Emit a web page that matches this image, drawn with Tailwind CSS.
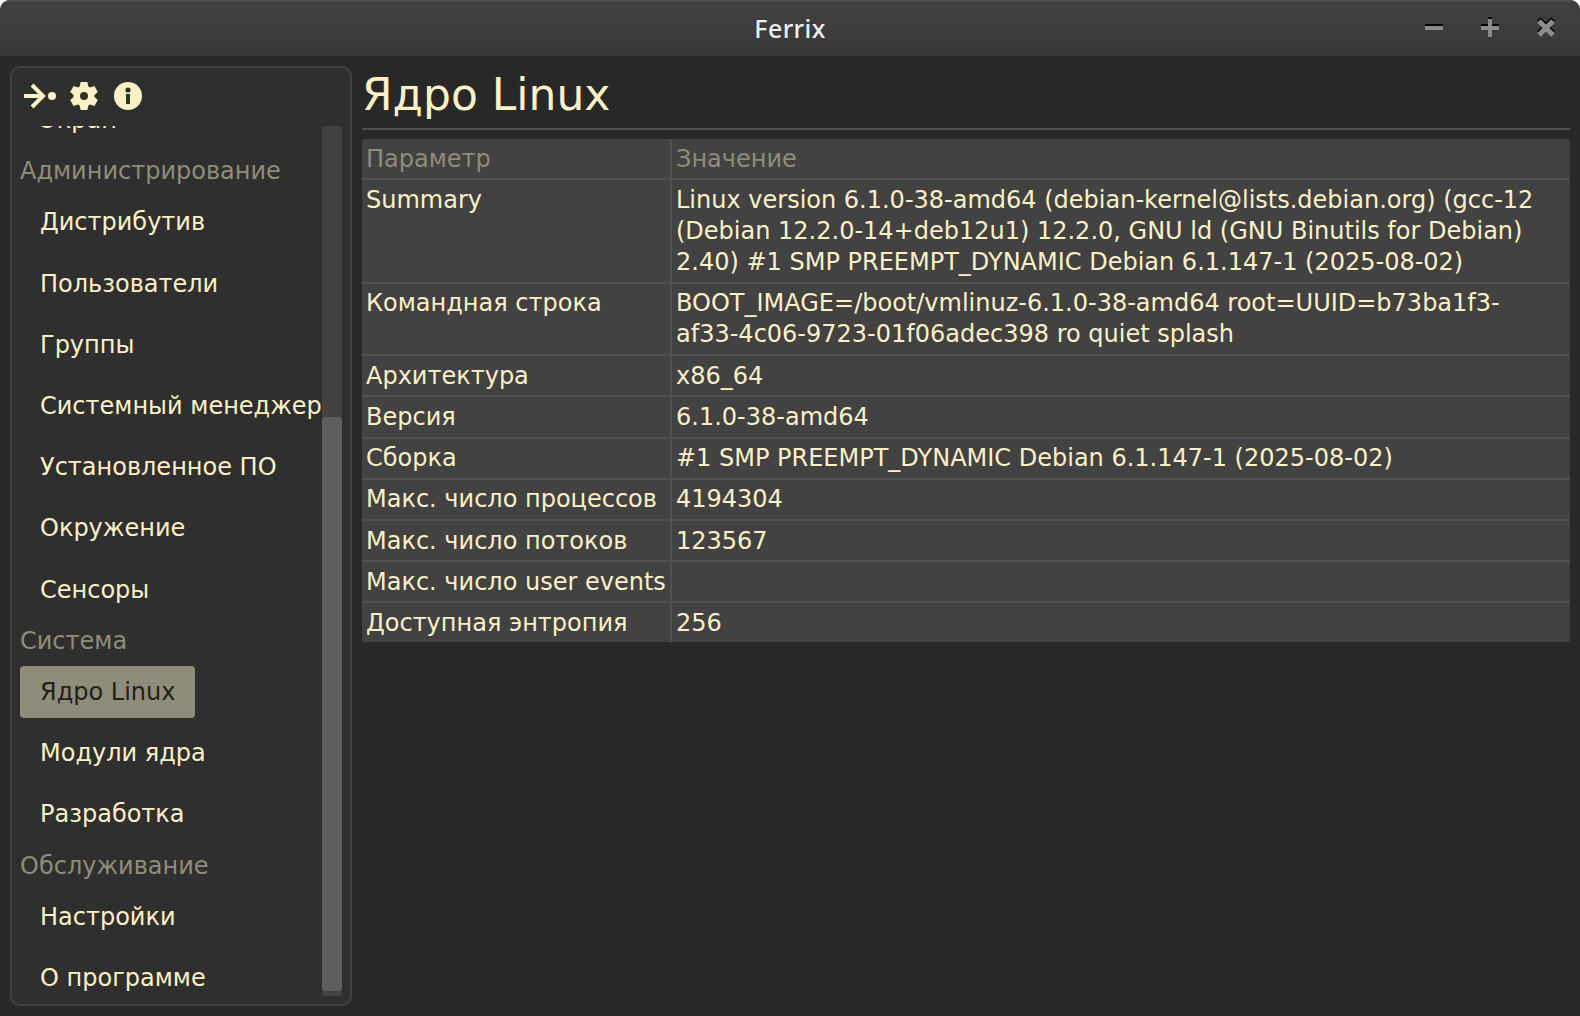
<!DOCTYPE html>
<html lang="ru">
<head>
<meta charset="utf-8">
<title>Ferrix</title>
<script src="https://cdn.jsdelivr.net/npm/@tailwindcss/browser@4"></script>
</head>
<body class="bg-white overflow-hidden">
<div class="w-[1580px] h-[1016px] flex flex-col bg-[#282828] rounded-t-[10px] overflow-hidden text-[24px] leading-[31.2px] text-[#fbf1c7] font-['DejaVu_Sans',sans-serif]">
  <header class="h-14 shrink-0 grid grid-cols-[1fr_auto_1fr] items-center border-t-2 border-[#4d4d4d] bg-linear-to-b from-[#414141] to-[#383838]">
    <span></span>
    <h1 class="font-['Noto_Sans',sans-serif] font-medium text-[25px] tracking-[0.4px] text-[#eeeeee] pb-px">Ferrix</h1>
    <div class="flex justify-end gap-[38px] pr-[25px] pb-1">
      <svg class="w-[18px] h-5" viewBox="0 0 18 20"><path d="M0 7h18v4H0z" fill="#000"/><path d="M0 9h18v4H0z" fill="#8c8c8c"/></svg>
      <svg class="w-[18px] h-5" viewBox="0 0 18 20"><path d="M7 0h4v7h7v4H0V7h7z" fill="#000"/><path d="M7 2h4v7h7v4h-7v7H7v-7H0V9h7z" fill="#8c8c8c"/></svg>
      <svg class="w-[18px] h-5" viewBox="0 0 18 20" fill="none" stroke-width="5"><path d="M2 2l14 14M16 2l-14 14" stroke="#000"/><path d="M2 4l14 14M16 4l-14 14" stroke="#8c8c8c"/></svg>
    </div>
  </header>
  <div class="flex-1 min-h-0 flex gap-[10px] p-[10px]">
    <aside class="w-[342px] shrink-0 flex flex-col rounded-[10px] border-2 border-[#424242] bg-[#2f2f2f] p-2">
      <div class="h-10 mb-[10px] flex items-center gap-3 pl-1">
        <svg class="w-8 h-8" viewBox="0 0 32 32"><path d="M0 16h19M8 5l11 11L8 27" fill="none" stroke="#fbf1c7" stroke-width="4"/><circle cx="28" cy="16" r="4" fill="#fbf1c7"/></svg>
        <svg class="w-8 h-8" viewBox="0 0 32 32" fill="#fbf1c7"><path d="M12.6 2h6.8l.9 4.5h-8.6zM12.6 30h6.8l.9-4.5h-8.6z"/><path d="M12.6 2h6.8l.9 4.5h-8.6zM12.6 30h6.8l.9-4.5h-8.6z" transform="rotate(60 16 16)"/><path d="M12.6 2h6.8l.9 4.5h-8.6zM12.6 30h6.8l.9-4.5h-8.6z" transform="rotate(120 16 16)"/><circle cx="16" cy="16" r="7.3" fill="none" stroke="#fbf1c7" stroke-width="6.6"/></svg>
        <svg class="w-8 h-8" viewBox="0 0 32 32"><circle cx="16" cy="16" r="14" fill="#fbf1c7"/><circle cx="16" cy="10" r="2.6" fill="#2f2f2f"/><path d="M14 14h4v10h-4z" fill="#2f2f2f"/></svg>
      </div>
      <div class="flex-1 min-h-0 flex overflow-hidden">
        <nav class="w-[302px] shrink-0 -mt-[31.8px] flex flex-col items-start gap-[10px] whitespace-nowrap">
          <a class="px-5 pt-[10.9px] pb-[9.1px]">Экран</a>
          <h2 class="text-[#8f8c7a] pt-[.9px] -mb-[.9px]">Администрирование</h2>
          <a class="px-5 pt-[10.9px] pb-[9.1px]">Дистрибутив</a>
          <a class="px-5 pt-[10.9px] pb-[9.1px]">Пользователи</a>
          <a class="px-5 pt-[10.9px] pb-[9.1px]">Группы</a>
          <a class="px-5 pt-[10.9px] pb-[9.1px]">Системный менеджер</a>
          <a class="px-5 pt-[10.9px] pb-[9.1px]">Установленное ПО</a>
          <a class="px-5 pt-[10.9px] pb-[9.1px]">Окружение</a>
          <a class="px-5 pt-[10.9px] pb-[9.1px]">Сенсоры</a>
          <h2 class="text-[#8f8c7a] pt-[.9px] -mb-[.9px]">Система</h2>
          <a class="px-5 pt-[10.7px] pb-[9.9px] -mb-[.6px] rounded bg-[#8f8c7a] text-[#1f1f1b]">Ядро Linux</a>
          <a class="px-5 pt-[10.7px] pb-[9.3px]">Модули ядра</a>
          <a class="px-5 pt-[10.7px] pb-[9.3px]">Разработка</a>
          <h2 class="text-[#8f8c7a] pt-[.9px] -mb-[.9px]">Обслуживание</h2>
          <a class="px-5 pt-[10.7px] pb-[9.3px]">Настройки</a>
          <a class="px-5 pt-[10.7px] pb-[9.3px]">О программе</a>
        </nav>
        <div class="w-5 h-[870px] shrink-0 rounded bg-[#424242] pt-[291px]"><div class="h-[574px] rounded bg-[#5e5e5e]"></div></div>
      </div>
    </aside>
    <main class="flex-1 min-w-0 flex flex-col">
      <h1 class="text-[44px] leading-[57.2px] pb-[4.8px] border-b-2 border-[#505050]">Ядро Linux</h1>
      <div class="mt-[9px] grid grid-cols-[308px_1fr] gap-[2px] rounded overflow-hidden bg-[#505050] *:bg-[#424242] *:px-1 *:pt-[4.7px] *:pb-[3.3px]">
        <div class="text-[#8f8c7a]">Параметр</div><div class="text-[#8f8c7a]">Значение</div>
        <div>Summary</div><div>Linux version 6.1.0-38-amd64 (debian-kernel@lists.debian.org) (gcc-12<br>(Debian 12.2.0-14+deb12u1) 12.2.0, GNU ld (GNU Binutils for Debian)<br>2.40) #1 SMP PREEMPT_DYNAMIC Debian 6.1.147-1 (2025-08-02)</div>
        <div class="pt-1!">Командная строка</div><div class="pt-[4.3px]! pb-[3.7px]!">BOOT_IMAGE=/boot/vmlinuz-6.1.0-38-amd64 root=UUID=b73ba1f3-<br>af33-4c06-9723-01f06adec398 ro quiet splash</div>
        <div>Архитектура</div><div>x86_64</div>
        <div>Версия</div><div>6.1.0-38-amd64</div>
        <div>Сборка</div><div>#1 SMP PREEMPT_DYNAMIC Debian 6.1.147-1 (2025-08-02)</div>
        <div>Макс. число процессов</div><div>4194304</div>
        <div>Макс. число потоков</div><div>123567</div>
        <div class="whitespace-nowrap">Макс. число user events</div><div></div>
        <div>Доступная энтропия</div><div>256</div>
      </div>
    </main>
  </div>
</div>
</body>
</html>
